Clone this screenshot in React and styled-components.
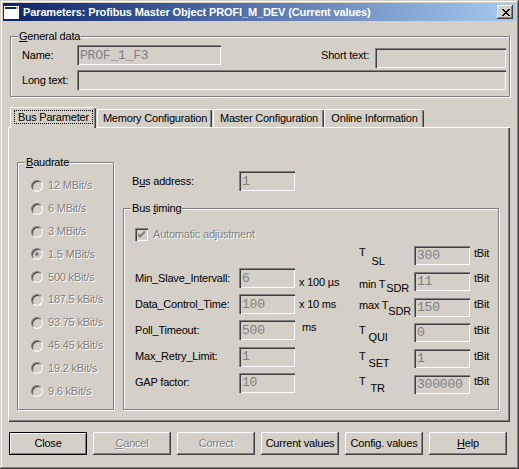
import React from 'react';
import styled, { createGlobalStyle } from 'styled-components';

const face = '#d4d0c8';

const GlobalStyle = createGlobalStyle`
  html, body {
    margin: 0;
    padding: 0;
    background: ${face};
  }
  body {
    font-family: "Liberation Sans", Arial, sans-serif;
    font-size: 11px;
    line-height: 13px;
    letter-spacing: -0.2px;
    color: #000;
  }
  * {
    box-sizing: border-box;
  }
`;

const Window = styled.div`
  width: 519px;
  height: 469px;
  padding: 3px;
  display: flex;
  flex-direction: column;
  background: ${face};
  box-shadow: inset -1px -1px #404040, inset 1px 1px ${face},
    inset -2px -2px #808080, inset 2px 2px #fff;
`;

const TitleBar = styled.div`
  height: 18px;
  flex: none;
  display: flex;
  align-items: center;
  padding: 0 3px 0 1px;
  background: linear-gradient(to right, #0a246a, #a6caf0);
`;

const TitleText = styled.span`
  flex: 1;
  margin-left: 4px;
  color: #fff;
  font-weight: bold;
  letter-spacing: -0.12px;
  white-space: nowrap;
`;

const CloseBox = styled.div`
  width: 16px;
  height: 14px;
  display: flex;
  align-items: center;
  justify-content: center;
  padding-left: 1px;
  background: ${face};
  box-shadow: inset -1px -1px #404040, inset 1px 1px #fff,
    inset -2px -2px #808080;
`;

const Body = styled.div`
  flex: 1;
  display: flex;
  flex-direction: column;
  padding: 0 6px 0 5px;
`;

// etched group box, legend sits on the top line
const Group = styled.div`
  display: flex;
  flex-direction: column;
  border: 1px solid #808080;
  box-shadow: inset 1px 1px #fff, 1px 1px #fff;
`;

const Legend = styled.span`
  align-self: flex-start;
  height: 13px;
  margin: -7px 0 -6px 7px;
  padding: 0 1px;
  background: ${face};
  white-space: nowrap;
`;

const GeneralGroup = styled(Group)`
  margin: 15px 0 0 2px;
  height: 61px;
`;

const GeneralGrid = styled.div`
  display: grid;
  grid-template-columns: 55px 144px 1fr auto 131px;
  grid-template-rows: 20px 20px;
  row-gap: 5px;
  padding: 8px 3px 0 11px;
`;

const Label = styled.span`
  align-self: center;
  white-space: nowrap;
  margin-right: ${p => p.$mr || 0}px;
`;

const Field = styled.div`
  width: ${p => (p.$w ? `${p.$w}px` : 'auto')};
  height: ${p => p.$h || 20}px;
  margin-top: ${p => p.$mt || 0}px;
  grid-column: ${p => p.$span || 'auto'};
  display: flex;
  align-items: center;
  padding: 0 3px;
  background: ${face};
  box-shadow: inset 1px 1px #808080, inset 2px 2px #404040,
    inset -1px -1px #fff, inset -2px -2px ${face};
  font-family: "Liberation Mono", "Courier New", monospace;
  font-size: 13px;
  letter-spacing: -0.2px;
  color: #808080;
  white-space: nowrap;
  overflow: hidden;
`;

const TabStrip = styled.div`
  height: 20px;
  margin-top: 10px;
  padding-left: 2px;
  display: flex;
  align-items: flex-end;
  position: relative;
  z-index: 1;
`;

const Tab = styled.div`
  width: ${p => p.$w}px;
  height: ${p => (p.$active ? 21 : 18)}px;
  margin: 0 0 ${p => (p.$active ? -1 : 0)}px ${p => p.$ml || 0}px;
  padding-bottom: ${p => (p.$active ? 2 : 0)}px;
  display: flex;
  align-items: center;
  justify-content: center;
  background: ${face};
  border-top: 1px solid #fff;
  border-left: 1px solid #fff;
  border-radius: 2px 2px 0 0;
  box-shadow: inset -1px 0 #404040, inset -2px 0 #808080;
  white-space: nowrap;
`;

const Focus = styled.span`
  height: 14px;
  display: flex;
  align-items: center;
  padding: 0 3px;
  border: 1px dotted #000;
`;

const Panel = styled.div`
  height: 295px;
  display: flex;
  gap: 9px;
  padding: 35px 0 0 9px;
  background: ${face};
  box-shadow: inset 1px 1px #fff, inset -1px -1px #404040,
    inset -2px -2px #808080;
`;

const BaudGroup = styled(Group)`
  width: 97px;
  height: 248px;
`;

const RadioList = styled.div`
  display: flex;
  flex-direction: column;
  padding: 11.6px 0 0 13px;
`;

const RadioItem = styled.div`
  height: 22.8px;
  display: flex;
  align-items: center;
  gap: 5px;
`;

const Radio = styled.span`
  width: 12px;
  height: 12px;
  flex: none;
  border-radius: 50%;
  display: flex;
  align-items: center;
  justify-content: center;
  background: ${face};
  border: 1px solid;
  border-color: #808080 #fff #fff #808080;
  box-shadow: inset 1px 1px #404040, inset -1px -1px ${face};
  &::after {
    content: '';
    display: ${p => (p.$checked ? 'block' : 'none')};
    width: 4px;
    height: 4px;
    border-radius: 50%;
    background: #808080;
  }
`;

const Dim = styled.span`
  color: #808080;
  text-shadow: 1px 1px 0 #fff;
  white-space: nowrap;
`;

const BusSection = styled.div`
  width: 376px;
  height: 248px;
  display: flex;
  flex-direction: column;
`;

const AddressRow = styled.div`
  display: flex;
  align-items: center;
  margin: 9px 0 0 9px;
`;

const AddressLabel = styled.span`
  width: 107px;
`;

const TimingGroup = styled(Group)`
  flex: 1;
  margin-top: 17px;
`;

const TimingBody = styled.div`
  padding: 19px 0 0 11px;
`;

const CheckRow = styled.div`
  height: 13px;
  display: flex;
  align-items: center;
  gap: 5px;
`;

const CheckBox = styled.span`
  width: 13px;
  height: 13px;
  flex: none;
  display: flex;
  align-items: center;
  justify-content: center;
  background: ${face};
  box-shadow: inset 1px 1px #808080, inset 2px 2px #404040,
    inset -1px -1px #fff, inset -2px -2px ${face};
`;

const Columns = styled.div`
  display: flex;
  margin-top: 5px;
`;

const LeftCol = styled.div`
  width: 223px;
  padding-top: 22px;
`;

const LeftRow = styled.div`
  height: 26.2px;
  display: grid;
  grid-template-columns: 104px 56px auto;
  align-items: start;
`;

const RowLabel = styled.span`
  height: 20px;
  display: flex;
  align-items: center;
  white-space: nowrap;
`;

const Unit = styled.span`
  margin: ${p => p.$mt}px 0 0 ${p => p.$ml || 4}px;
  white-space: nowrap;
`;

const RightCol = styled.div`
  display: flex;
  flex-direction: column;
`;

const RightRow = styled.div`
  height: 25.8px;
  display: grid;
  grid-template-columns: 56px 56px auto;
  align-items: start;
`;

const SymLabel = styled.span`
  display: flex;
  align-items: flex-start;
  padding-left: 1px;
  white-space: nowrap;
`;

const SymPart = styled.span`
  margin-top: ${p => p.$mt}px;
  margin-left: ${p => p.$ml || 0}px;
`;

const ButtonRow = styled.div`
  display: flex;
  gap: 6px;
  margin: 10px 0 0 1px;
`;

const Button = styled.div`
  width: 78px;
  height: 23px;
  display: flex;
  align-items: center;
  justify-content: center;
  background: ${face};
  border: ${p => (p.$default ? '1px solid #000' : 'none')};
  box-shadow: ${p =>
    p.$default
      ? 'inset 1px 1px #fff, inset -1px -1px #808080'
      : 'inset -1px -1px #404040, inset 1px 1px #fff, inset -2px -2px #808080'};
  white-space: nowrap;
`;

const baudrates = [
  '12 MBit/s',
  '6 MBit/s',
  '3 MBit/s',
  '1.5 MBit/s',
  '500 kBit/s',
  '187.5 kBit/s',
  '93.75 kBit/s',
  '45.45 kBit/s',
  '19.2 kBit/s',
  '9.6 kBit/s',
];

const timing = [
  { label: 'Min_Slave_Intervall:', value: '6', unit: 'x 100 µs', top: 8 },
  { label: 'Data_Control_Time:', value: '100', unit: 'x 10 ms', top: 4 },
  { label: 'Poll_Timeout:', value: '500', unit: 'ms', top: 1, ml: 7 },
  { label: 'Max_Retry_Limit:', value: '1' },
  { label: 'GAP factor:', value: '10' },
];

const symbols = [
  { pre: 'T', sub: 'SL', value: '300', a: -0.5, b: 8.5, gap: 6 },
  { pre: 'min T', sub: 'SDR', value: '11', a: 6, b: 10, gap: 1 },
  { pre: 'max T', sub: 'SDR', value: '150', a: 1.5, b: 7, gap: 0 },
  { pre: 'T', sub: 'QUI', value: '0', a: 0.5, b: 7.5, gap: 3 },
  { pre: 'T', sub: 'SET', value: '1', a: 0.5, b: 7.5, gap: 3 },
  { pre: 'T', sub: 'TR', value: '300000', a: 0.5, b: 7.5, gap: 5 },
];

const tabs = [
  { name: 'Bus Parameter', w: 86, active: true },
  { name: 'Memory Configuration', w: 115, ml: 1 },
  { name: 'Master Configuration', w: 111, ml: 1 },
  { name: 'Online Information', w: 100, ml: 0 },
];

function WindowIcon() {
  return (
    <svg width="15" height="13" viewBox="0 0 15 13" shapeRendering="crispEdges">
      <rect x="0" y="0" width="15" height="13" fill="#fff" />
      <rect x="1" y="1" width="13" height="2" fill="#0a246a" />
      <rect x="12" y="1" width="2" height="2" fill="#d6a050" />
      <rect x="1" y="3" width="13" height="9" fill="#fff" />
    </svg>
  );
}

function CloseGlyph() {
  const rows = [
    [0, 6], [1, 5], [2, 4], [3, 3], [2, 4], [1, 5], [0, 6],
  ];
  return (
    <svg width="8" height="7" viewBox="0 0 8 7" shapeRendering="crispEdges">
      {rows.map(([l, r], i) => (
        <g key={i}>
          <rect x={l} y={i} width="2" height="1" fill="#000" />
          {l !== r && <rect x={r} y={i} width="2" height="1" fill="#000" />}
        </g>
      ))}
    </svg>
  );
}

function CheckMark() {
  return (
    <svg width="7" height="7" viewBox="0 0 7 7">
      <path d="M0 2 L2 4 L7 -1 L7 2 L2 7 L0 5 Z" fill="#808080" />
    </svg>
  );
}

export default function App() {
  return (
    <>
      <GlobalStyle />
      <Window>
        <TitleBar>
          <WindowIcon />
          <TitleText>Parameters: Profibus Master Object PROFI_M_DEV (Current values)</TitleText>
          <CloseBox>
            <CloseGlyph />
          </CloseBox>
        </TitleBar>

        <Body>
          <GeneralGroup>
            <Legend>
              <u>G</u>eneral data
            </Legend>
            <GeneralGrid>
              <Label>Name:</Label>
              <Field $w={144}>PROF_1_F3</Field>
              <span />
              <Label $mr={6}>Short text:</Label>
              <Field $w={131} $mt={3} />
              <Label>Long text:</Label>
              <Field $span="2 / -1" />
            </GeneralGrid>
          </GeneralGroup>

          <TabStrip>
            {tabs.map(t => (
              <Tab key={t.name} $w={t.w} $ml={t.ml} $active={t.active}>
                {t.active ? <Focus>{t.name}</Focus> : t.name}
              </Tab>
            ))}
          </TabStrip>

          <Panel>
            <BaudGroup>
              <Legend>
                <u>B</u>audrate
              </Legend>
              <RadioList>
                {baudrates.map(b => (
                  <RadioItem key={b}>
                    <Radio $checked={b === '1.5 MBit/s'} />
                    <Dim>{b}</Dim>
                  </RadioItem>
                ))}
              </RadioList>
            </BaudGroup>

            <BusSection>
              <AddressRow>
                <AddressLabel>
                  B<u>u</u>s address:
                </AddressLabel>
                <Field $w={56}>1</Field>
              </AddressRow>

              <TimingGroup>
                <Legend>
                  Bus <u>t</u>iming
                </Legend>
                <TimingBody>
                  <CheckRow>
                    <CheckBox>
                      <CheckMark />
                    </CheckBox>
                    <Dim>Automatic adjustment</Dim>
                  </CheckRow>

                  <Columns>
                    <LeftCol>
                      {timing.map(r => (
                        <LeftRow key={r.label}>
                          <RowLabel>{r.label}</RowLabel>
                          <Field $w={56}>{r.value}</Field>
                          {r.unit && (
                            <Unit $mt={r.top} $ml={r.ml}>
                              {r.unit}
                            </Unit>
                          )}
                        </LeftRow>
                      ))}
                    </LeftCol>

                    <RightCol>
                      {symbols.map(s => (
                        <RightRow key={s.pre + s.sub}>
                          <SymLabel>
                            <SymPart $mt={s.a}>{s.pre}</SymPart>
                            <SymPart $mt={s.b} $ml={s.gap}>
                              {s.sub}
                            </SymPart>
                          </SymLabel>
                          <Field $w={56} $h={19}>
                            {s.value}
                          </Field>
                          <Unit $mt={0.5}>tBit</Unit>
                        </RightRow>
                      ))}
                    </RightCol>
                  </Columns>
                </TimingBody>
              </TimingGroup>
            </BusSection>
          </Panel>

          <ButtonRow>
            <Button $default>Close</Button>
            <Button>
              <Dim>
                <u>C</u>ancel
              </Dim>
            </Button>
            <Button>
              <Dim>Correct</Dim>
            </Button>
            <Button>Current values</Button>
            <Button>Config. values</Button>
            <Button>
              <u>H</u>elp
            </Button>
          </ButtonRow>
        </Body>
      </Window>
    </>
  );
}
